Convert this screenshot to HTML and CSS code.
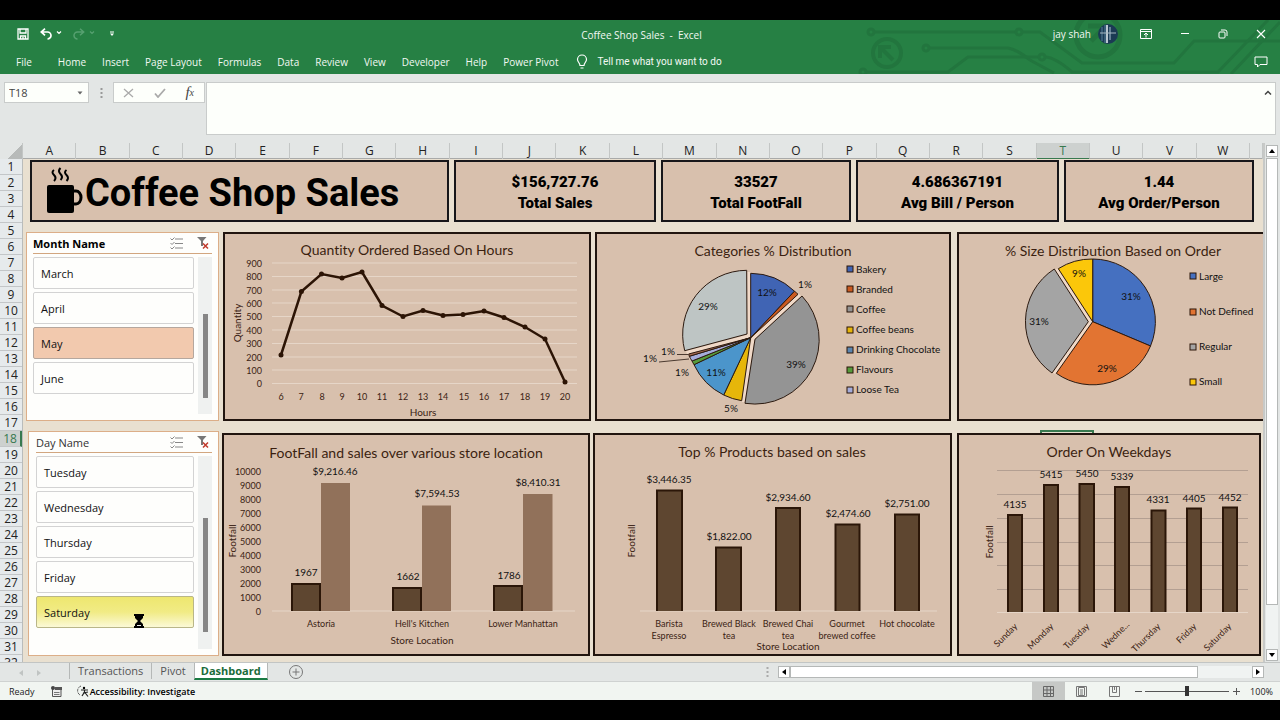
FILE: index.html
```html
<!DOCTYPE html>
<html lang="en">
<head>
<meta charset="utf-8">
<title>Coffee Shop Sales - Excel</title>
<link rel="stylesheet" href="styles.css">
</head>
<body>
<div class="app">
  <header class="ribbon">
    <svg class="circuit" viewBox="850 20 430 54" preserveAspectRatio="xMaxYMin slice" aria-hidden="true">
      <g fill="none" stroke="#22753e" stroke-width="3">
        <circle cx="871" cy="32" r="3"/><path d="M874 32H1016"/><circle cx="1019" cy="32" r="3"/><path d="M1022 32H1040L1082 63H1174L1194 41H1280"/>
        <circle cx="926" cy="48" r="3"/><path d="M929 48H1008Q1018 50 1030 60L1054 73"/>
        <circle cx="863" cy="72" r="3"/><path d="M866 72H948L968 57H1038"/><circle cx="1042" cy="57" r="3"/><path d="M1046 57Q1056 58 1072 72H1218L1268 20M1231 74L1280 22"/>
        <circle cx="887" cy="53" r="14" stroke-width="4"/><path d="M880 58V47H891M881 48L893 60" stroke-width="4"/>
        <circle cx="1098" cy="35" r="22" stroke-width="5"/><path d="M1088 26H1106V44M1105 27L1091 41" stroke-width="5"/>
      </g>
    </svg>
    <div class="titlebar">
      <div class="quick">
        <button class="ico" aria-label="Save"><svg width="12" height="12" viewBox="0 0 12 12"><path d="M1 1H11V11H1ZM3 1V5H9V1M3.500 11V8H8.500V11M6 9V11" fill="none" stroke="#fff" stroke-width="1.300"/></svg></button>
        <button class="ico" aria-label="Undo"><svg width="22" height="12" viewBox="0 0 22 12"><path d="M1 4H7.500A3.500 3.500 0 0 1 7.500 11M5 .700L1.300 4L5 7.300" fill="none" stroke="#fff" stroke-width="1.700"/><path d="M17 3.500L19 5.500L21 3.500" fill="none" stroke="#fff" stroke-width="1.200"/></svg></button>
        <button class="ico redo" aria-label="Redo" disabled><svg width="22" height="12" viewBox="0 0 22 12"><path d="M11 4H4.500A3.500 3.500 0 0 0 4.500 11M7 .700L10.700 4L7 7.300" fill="none" stroke="#56a070" stroke-width="1.500"/><path d="M17 3.500L19 5.500L21 3.500" fill="none" stroke="#56a070" stroke-width="1.200"/></svg></button>
        <button class="ico" aria-label="Customize quick access"><svg width="6" height="6" viewBox="0 0 6 6"><path d="M1 1H5" stroke="#fff"/><path d="M1 2.500H5L3 5Z" fill="#fff"/></svg></button>
      </div>
      <h1 class="doc">Coffee Shop Sales&nbsp; -&nbsp; Excel</h1>
      <div class="wincontrols">
        <span class="user">jay shah</span>
        <svg class="avatar" width="20" height="20" viewBox="0 0 20 20" aria-hidden="true"><circle cx="10" cy="10" r="10" fill="#1b3a54"/><path d="M4 3V17M7 1V19" stroke="#436982" stroke-width="1.500"/><path d="M9 1V19" stroke="#b9c6cf" stroke-width="2"/><path d="M12 3V16" stroke="#637f94" stroke-width="2"/><path d="M2 9H18" stroke="#a6b7c1"/></svg>
        <button class="ico w-rib" aria-label="Ribbon display options"><svg width="12" height="10" viewBox="0 0 12 10"><path d="M.500 .500H11.500V9.500H.500ZM.500 2.500H11.500M6 8.500V4.500M4 6L6 4L8 6" fill="none" stroke="#fff"/></svg></button>
        <button class="ico w-min" aria-label="Minimize"><svg width="10" height="10" viewBox="0 0 10 10"><path d="M1 4.500H9" stroke="#fff"/></svg></button>
        <button class="ico w-max" aria-label="Restore"><svg width="10" height="10" viewBox="0 0 10 10"><rect x="1" y="3" width="6" height="6" rx="1" fill="none" stroke="#fff"/><path d="M3 1H7A2 2 0 0 1 9 3V7" fill="none" stroke="#fff"/></svg></button>
        <button class="ico" aria-label="Close"><svg width="10" height="10" viewBox="0 0 10 10"><path d="M1 1L9 9M9 1L1 9" stroke="#fff" stroke-width="1.100"/></svg></button>
      </div>
    </div>
    <nav class="menu">
      <button class="file">File</button><button>Home</button><button>Insert</button><button>Page Layout</button><button>Formulas</button><button>Data</button><button>Review</button><button>View</button><button>Developer</button><button>Help</button><button>Power Pivot</button>
      <button class="tell"><svg width="12" height="16" viewBox="0 0 12 16"><path d="M4 11.500C4 9 1.500 8 1.500 5.500A4.500 4.500 0 0 1 10.500 5.500C10.500 8 8 9 8 11.500ZM4.500 14H7.500" fill="none" stroke="#fff" stroke-width="1.200"/></svg>Tell me what you want to do</button>
      <button class="comment" aria-label="Comments"><svg width="14" height="12" viewBox="0 0 14 12"><path d="M1 1H13V8.500H6L3.500 11V8.500H1Z" fill="none" stroke="#fff"/></svg></button>
    </nav>
  </header>

  <section class="formula">
    <div class="namebox"><input value="T18" aria-label="Name box"><button aria-label="Names"><svg width="6" height="4" viewBox="0 0 6 4"><path d="M.500 .500H5.500L3 3.500Z" fill="#666"/></svg></button></div>
    <svg class="dots" width="3" height="12" viewBox="0 0 3 12"><path d="M1.500 1V11" stroke="#999" stroke-width="2" stroke-dasharray="2 2"/></svg>
    <div class="fx">
      <button aria-label="Cancel"><svg width="11" height="10" viewBox="0 0 11 10"><path d="M1 1L10 9M10 1L1 9" stroke="#aaa" stroke-width="1.300"/></svg></button>
      <button aria-label="Enter"><svg width="12" height="10" viewBox="0 0 12 10"><path d="M1 5.500L4 9L11 1" fill="none" stroke="#aaa" stroke-width="1.800"/></svg></button>
      <button class="fn" aria-label="Insert function"><i>f</i><sub>x</sub></button>
    </div>
    <textarea class="bar" aria-label="Formula bar"></textarea>
    <svg class="collapse" width="8" height="5" viewBox="0 0 8 5"><path d="M1 4.500L4 1.500L7 4.500" fill="none" stroke="#444" stroke-width="1.500"/></svg>
  </section>

  <main class="work">
    <div class="sheet">
      <div class="cols"><span class="corner"></span><span>A</span><span>B</span><span>C</span><span>D</span><span>E</span><span>F</span><span>G</span><span>H</span><span>I</span><span>J</span><span>K</span><span>L</span><span>M</span><span>N</span><span>O</span><span>P</span><span>Q</span><span>R</span><span>S</span><span class="on">T</span><span>U</span><span>V</span><span>W</span><span></span></div>
      <div class="body">
        <div class="rows"><span>1</span><span>2</span><span>3</span><span>4</span><span>5</span><span>6</span><span>7</span><span>8</span><span>9</span><span>10</span><span>11</span><span>12</span><span>13</span><span>14</span><span>15</span><span>16</span><span>17</span><span class="on">18</span><span>19</span><span>20</span><span>21</span><span>22</span><span>23</span><span>24</span><span>25</span><span>26</span><span>27</span><span>28</span><span>29</span><span>30</span><span>31</span><span>32</span></div>
        <div class="canvas">
          <i class="selected"></i>
          <div class="row kpis">
            <div class="card banner">
              <svg width="37" height="48" viewBox="0 0 37 48" aria-hidden="true"><rect x="1" y="18" width="27" height="28" rx="2"/><path d="M28 24H30A5 6.500 0 0 1 30 37H28" fill="none" stroke="#000" stroke-width="3"/><path d="M8 3Q5 5 8 8T8 14M14.500 1Q11.500 4 14.500 7T14.500 13M20.500 3Q17.500 5 20.500 8T20.500 14" fill="none" stroke="#000" stroke-width="2"/></svg>
              <h2>Coffee Shop Sales</h2>
            </div>
            <div class="card kpi"><b>$156,727.76</b><b>Total Sales</b></div>
            <div class="card kpi"><b>33527</b><b>Total FootFall</b></div>
            <div class="card kpi"><b>4.686367191</b><b>Avg Bill / Person</b></div>
            <div class="card kpi"><b>1.44</b><b>Avg Order/Person</b></div>
          </div>

          <div class="row middle">
            <section class="slicer">
              <header><h3>Month Name</h3>
                <button aria-label="Multi-select"><svg width="13" height="13" viewBox="0 0 13 13"><path d="M5 2H13M5 6.500H13M5 11H13M.500 1.500L2 3L4.500 .500M.500 6L2 7.500L4.500 5M.500 10.500L2 12L4.500 9.500" fill="none" stroke="#888"/></svg></button>
                <button aria-label="Clear filter"><svg width="14" height="14" viewBox="0 0 14 14"><path d="M1 1H10.500L7 5V10H5V5Z" fill="#777"/><path d="M7 7.500L12 12.500M12 7.500L7 12.500" stroke="#c0392b" stroke-width="1.500"/></svg></button></header>
              <div class="pick"><div class="items"><button>March</button><button>April</button><button class="peach">May</button><button>June</button></div><div class="track"><i class="t1"></i></div></div>
            </section>
            <svg class="chart" viewBox="225 234 364 185" role="img" aria-label="Quantity Ordered Based On Hours">
              <path class="gl" d="M272 263H577M272 276.500H577M272 290H577M272 303H577M272 316.500H577M272 330H577M272 343.500H577M272 357H577M272 370H577M272 383.500H577"/>
              <text class="ct" x="407" y="255">Quantity Ordered Based On Hours</text>
              <g class="ax end"><text x="262" y="267">900</text><text x="262" y="280">800</text><text x="262" y="294">700</text><text x="262" y="307">600</text><text x="262" y="320">500</text><text x="262" y="334">400</text><text x="262" y="347">300</text><text x="262" y="361">200</text><text x="262" y="374">100</text><text x="262" y="387">0</text></g>
              <g class="ax"><text x="281" y="400">6</text><text x="301" y="400">7</text><text x="322" y="400">8</text><text x="342" y="400">9</text><text x="362" y="400">10</text><text x="382" y="400">11</text><text x="403" y="400">12</text><text x="423" y="400">13</text><text x="443" y="400">14</text><text x="464" y="400">15</text><text x="484" y="400">16</text><text x="504" y="400">17</text><text x="525" y="400">18</text><text x="545" y="400">19</text><text x="565" y="400">20</text></g>
              <text class="at" x="423" y="416">Hours</text>
              <text class="at" transform="translate(241 323) rotate(-90)">Quantity</text>
              <polyline class="ln" points="281,355 301.400,291.500 321.500,274 342,278 362,272 382,305.500 403,316.500 423,310.500 443,315.500 463,314.500 484,311 504,317.500 525,327 545,339 565,382"/>
              <g fill="#2c1405"><circle cx="281" cy="355" r="2.500"/><circle cx="301.400" cy="291.500" r="2.500"/><circle cx="321.500" cy="274" r="2.500"/><circle cx="342" cy="278" r="2.500"/><circle cx="362" cy="272" r="2.500"/><circle cx="382" cy="305.500" r="2.500"/><circle cx="403" cy="316.500" r="2.500"/><circle cx="423" cy="310.500" r="2.500"/><circle cx="443" cy="315.500" r="2.500"/><circle cx="463" cy="314.500" r="2.500"/><circle cx="484" cy="311" r="2.500"/><circle cx="504" cy="317.500" r="2.500"/><circle cx="525" cy="327" r="2.500"/><circle cx="545" cy="339" r="2.500"/><circle cx="565" cy="382" r="2.500"/></g>
            </svg>
            <svg class="chart" viewBox="597 234 352 185" role="img" aria-label="Categories % Distribution">
              <text class="ct" x="773" y="256">Categories % Distribution</text>
              <path class="halo" d="M800 295L753 338.500L743 402M686.500 352.500L749 336L748.700 272"/>
              <g class="pie">
                <path fill="#4064b4" d="M750.700 337.700V273.300A64.300 64.300 0 0 1 794.500 291.200Z"/>
                <path fill="#cb5a20" d="M750.700 337.700L794.500 291.200A64.300 64.300 0 0 1 798 294.300Z"/>
                <path fill="#949494" d="M755 339.300L802 296A64.300 64.300 0 0 1 745 403.300Z"/>
                <path fill="#e6b60a" d="M750.700 337.700L741.700 400.700A64.300 64.300 0 0 1 723.700 395Z"/>
                <path fill="#4b95cb" d="M750.700 337.700L723.700 395A64.300 64.300 0 0 1 694 364.700Z"/>
                <path fill="#569b3b" d="M750.700 337.700L694 364.700A64.300 64.300 0 0 1 692 361Z"/>
                <path fill="#a5addb" d="M750.700 337.700L692 361A64.300 64.300 0 0 1 689.300 356.300Z"/>
                <path fill="#a66a50" d="M750.700 337.700L689.300 356.300A64.300 64.300 0 0 1 688.700 354Z"/>
                <path fill="#bec5c4" d="M747 334L684.700 350.700A64.300 64.300 0 0 1 746.700 270.300Z"/>
              </g>
              <path d="M659 362L689 359M677 354.500H688" stroke="#4b3a30" fill="none"/>
              <g class="dl"><text x="767" y="296">12%</text><text x="805" y="288">1%</text><text x="708" y="310">29%</text><text x="796" y="368">39%</text><text x="716" y="376">11%</text><text x="731" y="412">5%</text><text x="668" y="355">1%</text><text x="650" y="362">1%</text><text x="682" y="376">1%</text></g>
              <g class="key"><rect fill="#4064b4" x="847" y="266" width="6" height="6"/><rect fill="#cb5a20" x="847" y="286" width="6" height="6"/><rect fill="#949494" x="847" y="306" width="6" height="6"/><rect fill="#e6b60a" x="847" y="327" width="6" height="6"/><rect fill="#5b86b0" x="847" y="347" width="6" height="6"/><rect fill="#569b3b" x="847" y="367" width="6" height="6"/><rect fill="#a5addb" x="847" y="387" width="6" height="6"/></g>
              <g class="lg"><text x="856" y="273">Bakery</text><text x="856" y="293">Branded</text><text x="856" y="313">Coffee</text><text x="856" y="333">Coffee beans</text><text x="856" y="353">Drinking Chocolate</text><text x="856" y="373">Flavours</text><text x="856" y="393">Loose Tea</text></g>
            </svg>
            <svg class="chart third open" viewBox="959 234 304 185" role="img" aria-label="% Size Distribution Based on Order">
              <text class="ct" x="1113" y="256">% Size Distribution Based on Order</text>
              <path class="halo" d="M1054 373.500L1090.500 321.700L1056.300 269"/>
              <g class="pie">
                <path fill="#4570c0" d="M1092.700 321.700V259A62.700 62.700 0 0 1 1150.500 346Z"/>
                <path fill="#e27432" d="M1092.700 321.700L1150.500 346A62.700 62.700 0 0 1 1056.300 373.300Z"/>
                <path fill="#a4a4a4" d="M1088.300 321.700L1052 373A62.700 62.700 0 0 1 1054.300 269Z"/>
                <path fill="#fbc70a" d="M1092.700 321.700L1058.300 268.700A62.700 62.700 0 0 1 1092.700 259Z"/>
              </g>
              <g class="dl"><text x="1131" y="300">31%</text><text x="1107" y="372">29%</text><text x="1039" y="325">31%</text><text x="1079" y="277">9%</text></g>
              <g class="key"><rect fill="#4570c0" x="1190" y="273" width="6" height="6"/><rect fill="#e27432" x="1190" y="309" width="6" height="6"/><rect fill="#a4a4a4" x="1190" y="344" width="6" height="6"/><rect fill="#fbc70a" x="1190" y="379" width="6" height="6"/></g>
              <g class="lg"><text x="1199" y="280">Large</text><text x="1199" y="315">Not Defined</text><text x="1199" y="350">Regular</text><text x="1199" y="385">Small</text></g>
            </svg>
          </div>

          <div class="row bottom">
            <section class="slicer">
              <header><h3 class="plain">Day Name</h3>
                <button aria-label="Multi-select"><svg width="13" height="13" viewBox="0 0 13 13"><path d="M5 2H13M5 6.500H13M5 11H13M.500 1.500L2 3L4.500 .500M.500 6L2 7.500L4.500 5M.500 10.500L2 12L4.500 9.500" fill="none" stroke="#888"/></svg></button>
                <button aria-label="Clear filter"><svg width="14" height="14" viewBox="0 0 14 14"><path d="M1 1H10.500L7 5V10H5V5Z" fill="#777"/><path d="M7 7.500L12 12.500M12 7.500L7 12.500" stroke="#c0392b" stroke-width="1.500"/></svg></button></header>
              <div class="pick"><div class="items"><button>Tuesday</button><button>Wednesday</button><button>Thursday</button><button>Friday</button><button class="yellow">Saturday<svg class="wait" width="10" height="14" viewBox="0 0 10 14"><path d="M0 0H10V2H9V4L6 7L9 10V12H10V14H0V12H1V10L4 7L1 4V2H0Z"/><path d="M3 11.500H7" stroke="#eee"/></svg></button></div><div class="track"><i class="t2"></i></div></div>
            </section>
            <svg class="chart" viewBox="224 435 364 219" role="img" aria-label="FootFall and sales over various store location">
              <path class="gl" d="M272 611H575"/>
              <text class="ct" x="406" y="458">FootFall and sales over various store location</text>
              <g class="ax end"><text x="261" y="475">10000</text><text x="261" y="489">9000</text><text x="261" y="503">8000</text><text x="261" y="517">7000</text><text x="261" y="531">6000</text><text x="261" y="545">5000</text><text x="261" y="559">4000</text><text x="261" y="573">3000</text><text x="261" y="587">2000</text><text x="261" y="601">1000</text><text x="261" y="615">0</text></g>
              <g fill="#91715a"><path d="M321 483H350V611H321ZM422 505.500H451V611H422ZM523 494H552.500V611H523Z"/></g>
              <g class="dark"><path d="M292 611V584H320V611M393 611V588H421V611M494 611V586H522V611"/></g>
              <g class="dl"><text x="306" y="576">1967</text><text x="335" y="475">$9,216.46</text><text x="408" y="580">1662</text><text x="437" y="497">$7,594.53</text><text x="509" y="579">1786</text><text x="538" y="486">$8,410.31</text></g>
              <g class="ca"><text x="321" y="627">Astoria</text><text x="422" y="627">Hell's Kitchen</text><text x="523" y="627">Lower Manhattan</text></g>
              <text class="at" x="422" y="644">Store Location</text>
              <text class="at" transform="translate(236 541) rotate(-90)">Footfall</text>
            </svg>
            <svg class="chart" viewBox="595 435 355 219" role="img" aria-label="Top % Products based on sales">
              <path class="gl" d="M640 611H937"/>
              <text class="ct" x="772" y="457">Top % Products based on sales</text>
              <g class="dark"><path d="M657 611V490.500H682V611M716 611V547.500H741V611M776 611V508H800V611M835.500 611V524.500H859.500V611M895 611V514.500H919V611"/></g>
              <g class="dl"><text x="669" y="483">$3,446.35</text><text x="729" y="540">$1,822.00</text><text x="788" y="501">$2,934.60</text><text x="848" y="517">$2,474.60</text><text x="907" y="507">$2,751.00</text></g>
              <g class="ca"><text x="669" y="627">Barista</text><text x="669" y="639">Espresso</text><text x="729" y="627">Brewed Black</text><text x="729" y="639">tea</text><text x="788" y="627">Brewed Chai</text><text x="788" y="639">tea</text><text x="847" y="627">Gourmet</text><text x="847" y="639">brewed coffee</text><text x="907" y="627">Hot chocolate</text></g>
              <text class="at" x="788" y="650">Store Location</text>
              <text class="at" transform="translate(635 541) rotate(-90)">Footfall</text>
            </svg>
            <svg class="chart third" viewBox="959 435 300 219" role="img" aria-label="Order On Weekdays">
              <path class="gd" d="M997 470.500H1248M997 494.500H1248M997 518.500H1248M997 542.500H1248M997 565.500H1248M997 589.500H1248"/><path class="gl" d="M997 612.500H1248"/>
              <text class="ct" x="1109" y="457">Order On Weekdays</text>
              <g class="dark"><path d="M1008 612V515H1022V612M1044 612V485H1058V612M1079.500 612V484H1094V612M1115 612V487H1129V612M1151.500 612V510.500H1165.500V612M1187 612V508.500H1201V612M1223 612V507.500H1237V612"/></g>
              <g class="dl"><text x="1015" y="508">4135</text><text x="1051" y="478">5415</text><text x="1087" y="477">5450</text><text x="1122" y="480">5339</text><text x="1158" y="503">4331</text><text x="1194" y="502">4405</text><text x="1230" y="501">4452</text></g>
              <g class="ca end"><text transform="translate(1018 627) rotate(-45)">Sunday</text><text transform="translate(1054 627) rotate(-45)">Monday</text><text transform="translate(1090 627) rotate(-45)">Tuesday</text><text transform="translate(1130 625) rotate(-45)">Wedne...</text><text transform="translate(1161 627) rotate(-45)">Thursday</text><text transform="translate(1197 627) rotate(-45)">Friday</text><text transform="translate(1232 627) rotate(-45)">Saturday</text></g>
              <text class="at" transform="translate(993 542) rotate(-90)">Footfall</text>
            </svg>
          </div>
        </div>
      </div>
    </div>
    <div class="vscroll">
      <button aria-label="Scroll up"><svg width="6" height="4" viewBox="0 0 6 4"><path d="M0 4L3 0L6 4Z"/></svg></button>
      <div class="vthumb"></div><div class="vrest"></div>
      <button aria-label="Scroll down"><svg width="6" height="4" viewBox="0 0 6 4"><path d="M0 0L3 4L6 0Z"/></svg></button>
    </div>
  </main>

  <nav class="tabs">
    <span class="arrows"><svg width="22" height="8" viewBox="0 0 22 8"><path d="M4 1V7L0 4ZM18 1V7L22 4Z" fill="#c0c4c3"/></svg></span>
    <button>Transactions</button><button class="pivot">Pivot</button><button class="active">Dashboard</button>
    <button class="add" aria-label="New sheet"><svg width="14" height="14" viewBox="0 0 14 14"><circle cx="7" cy="7" r="6.500" fill="none" stroke="#777"/><path d="M3.500 7H10.500M7 3.500V10.500" stroke="#777"/></svg></button>
    <div class="hscroll">
      <svg class="dots" width="3" height="12" viewBox="0 0 3 12"><path d="M1.500 1V11" stroke="#aaa" stroke-width="2" stroke-dasharray="2 2"/></svg>
      <button aria-label="Scroll left"><svg width="4" height="6" viewBox="0 0 4 6"><path d="M4 0V6L0 3Z"/></svg></button><div class="hthumb"></div><div class="hrest"></div><button aria-label="Scroll right"><svg width="4" height="6" viewBox="0 0 4 6"><path d="M0 0V6L4 3Z"/></svg></button>
    </div>
  </nav>

  <footer class="status">
    <span>Ready</span>
    <svg class="rec" width="11" height="11" viewBox="0 0 11 11"><path d="M1.500 3V10.500H10V3" fill="#eee" stroke="#555"/><rect x="4" y="1" width="7" height="3" fill="#555"/><circle cx="2" cy="2" r="2" fill="#444"/><path d="M3 6.500H8.500M3 8.500H8.500" stroke="#777"/></svg>
    <svg class="acc" width="13" height="12" viewBox="0 0 13 12"><path d="M5 1A5 5 0 0 0 4 10" fill="none" stroke="#555" stroke-dasharray="3 1"/><circle cx="8" cy="3" r="1.200"/><path d="M5 5H12M8.500 5V7L6 11M8.500 7L12 11.500M7 8L12 7" fill="none" stroke="#222" stroke-width="1.200"/></svg>
    <b>Accessibility: Investigate</b>
    <div class="views">
      <button class="on" aria-label="Normal"><svg width="11" height="11" viewBox="0 0 11 11"><path d="M.500 .500H10.500V10.500H.500ZM.500 4H10.500M.500 7.500H10.500M4 .500V10.500M7.500 .500V10.500" fill="none" stroke="#666"/></svg></button>
      <button aria-label="Page layout"><svg width="11" height="11" viewBox="0 0 11 11"><path d="M.500 .500H10.500V10.500H.500ZM2.500 1.500H8.500V9.500H2.500ZM4 4H7M4 6H7M4 8H7" fill="none" stroke="#777"/></svg></button>
      <button aria-label="Page break preview"><svg width="11" height="11" viewBox="0 0 11 11"><path d="M.500 .500H10.500V10.500H.500ZM3.500 .500V6.500H7.500V.500M5.500 .500V4" fill="none" stroke="#777"/></svg></button>
      <button class="zb" aria-label="Zoom out"><svg width="7" height="7" viewBox="0 0 7 7"><path d="M0 3.500H7" stroke="#555"/></svg></button>
      <input type="range" min="0" max="200" value="100" aria-label="Zoom">
      <button class="zb" aria-label="Zoom in"><svg width="7" height="7" viewBox="0 0 7 7"><path d="M0 3.500H7M3.500 0V7" stroke="#555"/></svg></button>
      <span class="pct">100%</span>
    </div>
  </footer>
</div>
</body>
</html>
```

FILE: styles.css
```css
* { box-sizing: border-box; }
body { margin: 0; background: #000; font-family: "Open Sans", "Noto Sans", sans-serif; font-size: 10px; color: #222; }
button { font: inherit; color: inherit; background: none; border: 0; padding: 0; margin: 0; display: flex; align-items: center; }
h1, h2, h3 { margin: 0; font: inherit; }
.app { height: 100vh; padding: 20px 0; display: flex; flex-direction: column; }

.ribbon { position: relative; background: #268044; color: #f2f8f3; flex: none; }
.circuit { position: absolute; right: 0; top: 0; width: 430px; height: 54px; }
.titlebar { position: relative; height: 29px; display: grid; grid-template-columns: 1fr auto 1fr; align-items: center; padding: 0 14px 0 17px; }
.quick { display: flex; align-items: center; gap: 11px; padding-bottom: 2px; }
.redo { margin-right: 3px; }
.wincontrols { display: flex; align-items: center; justify-content: flex-end; padding-bottom: 2px; }
.avatar { margin: 0 22px 0 7px; }
.w-rib, .w-min, .w-max { margin-right: 28px; }
.menu { position: relative; height: 25px; display: flex; align-items: center; gap: 16px; padding: 0 12px 0 16px; }
.menu .file { margin-right: 10px; }
.menu .tell { margin-left: 2px; gap: 9px; font-family: Roboto, sans-serif; }
.menu .comment { margin-left: auto; }

.formula { position: relative; flex: none; background: #e3e6e5; display: flex; align-items: flex-start; padding: 8px 4px; height: 69px; }
.namebox { display: flex; width: 85px; height: 21px; background: #fdfffb; border: 1px solid #c9cccb; padding-right: 5px; }
.namebox input { flex: 1; min-width: 0; border: 0; background: none; font: 11px "Open Sans", sans-serif; color: #444; padding: 0 4px; }
.formula .dots { margin: 5px 10px 0 11px; }
.fx { display: flex; width: 92px; height: 21px; background: #fdfffb; border: 1px solid #c9cccb; margin-right: 1px; justify-content: space-between; padding: 0 10px 0 9px; }
.fn { font: 15px "Liberation Serif", serif; color: #444; }
.fn sub { font-size: 10px; font-style: italic; }
.bar { flex: 1; height: 53px; resize: none; border: 1px solid #c9cccb; background: #fdfffb; margin: 0; }
.collapse { position: absolute; right: 8px; top: 16px; }

.work { flex: 1; min-height: 0; display: flex; background: #e3e6e5; }
.sheet { flex: 1; min-width: 0; display: flex; flex-direction: column; border-right: 2px solid #c7c9c7; }
.cols { display: grid; grid-template-columns: 23px repeat(23, 1fr) 13px; height: 16px; flex: none; font-size: 12px; line-height: 15px; text-align: center; background: #e3e6e5; border-bottom: 1px solid #a9aaa9; }
.cols span { border-right: 1px solid #c3c6c5; }
.cols .corner { background: linear-gradient(135deg, #e3e6e5 60%, #b7bab9 60%); }
.cols .on { background: #cdd1cf; color: #38794f; border-bottom: 2px solid #38794f; }
.body { flex: 1; min-height: 0; display: flex; overflow: hidden; }
.rows { width: 23px; flex: none; border-right: 1px solid #b9bcbb; font-size: 12px; text-align: center; background: #e6eaec; overflow: hidden; }
.rows span { display: block; height: 16px; line-height: 16px; border-bottom: 1px solid #c3c6c8; }
.rows .on { background: #cdd1cf; color: #38794f; border-right: 2px solid #38794f; }

.canvas { position: relative; flex: 1; min-width: 0; background: #e9e0d0; padding: 1px 0 6px; display: flex; flex-direction: column; gap: 10px; }
.selected { position: absolute; left: 82%; top: 271px; width: 54px; height: 16px; border: 2px solid #38794f; }
.row { position: relative; display: grid; min-height: 0; grid-template-rows: minmax(0, 1fr); }
.kpis { flex: 62 1 0; grid-template-columns: 419fr 202fr 190fr 203fr 190fr; gap: 5px; padding: 0 9px 0 7px; }
.middle { flex: 189 1 0; grid-template-columns: 193fr 368fr 356fr 308fr; gap: 4px; padding-left: 3px; }
.bottom { flex: 223 1 0; grid-template-columns: 191fr 368fr 359fr 306fr; gap: 3px; padding: 0 2px 0 5px; margin-top: 2px; }
.card, .chart { background: #d8c0ad; border: 2px solid #17161a; }
.card { display: flex; align-items: center; }
.banner { padding-left: 14px; gap: 2px; }
.banner h2 { font: bold 38px/52px Roboto, sans-serif; color: #000; white-space: nowrap; padding-top: 4px; }
.kpi { flex-direction: column; justify-content: center; padding-top: 3px; font: bold 15px/21px Roboto, sans-serif; color: #000; }
.chart { display: block; width: 100%; height: 100%; font-family: Lato, sans-serif; font-variant-ligatures: none; border-color: #21150f; }
.third { margin-left: 2px; width: calc(100% - 2px); }
.open { border-right: 0; }

.slicer { background: #fefefc; border: 1px solid #dcae88; padding: 0 6px; display: flex; flex-direction: column; min-height: 0; color: #222; }
.bottom .slicer { margin-top: -2px; padding-left: 7px; }
.slicer header { display: flex; align-items: center; height: 21px; gap: 13px; padding-right: 2px; border-bottom: 1px solid #d2a67f; }
.slicer h3 { flex: 1; font: bold 11px "Open Sans", sans-serif; color: #000; }
.slicer h3.plain { font-weight: 400; color: #333; }
.pick { flex: 1; display: flex; gap: 4px; padding: 3px 0 6px; min-height: 0; }
.items { flex: 1; display: flex; flex-direction: column; gap: 3px; }
.items button { position: relative; height: 32px; padding-left: 7px; font-size: 11px; border: 1px solid #d3d3d3; border-radius: 2px; color: #111; }
.items .peach { background: #f2c9ae; border-color: #b5a79e; }
.items .yellow { background: linear-gradient(#eee76f, #f1eb85 50%, #fbf9d6); border-color: #b9b688; }
.wait { position: absolute; left: 97px; top: 17px; }
.track { width: 14px; background: #eff1f0; display: flex; flex-direction: column; align-items: center; }
.track i { width: 5px; background: #868686; }
.t1 { margin-top: 57px; height: 84px; }
.t2 { margin-top: 62px; height: 114px; }

.chart text { text-anchor: middle; fill: #111; }
.chart .ct { font-size: 14px; fill: #3b1f10; }
.chart .ax text { font-size: 9px; fill: #3b2314; }
.chart .end text { text-anchor: end; }
.chart .ca text { font-size: 9px; fill: #3b2314; }
.chart .at { font-size: 10px; fill: #3b2314; }
.chart .dl text { font-size: 10px; }
.chart .lg text { font-size: 10px; text-anchor: start; }
.key rect { stroke: #2b1408; }
.gl { stroke: #e6d6c8; fill: none; }
.gd { stroke: #b39f92; fill: none; }
.ln { fill: none; stroke: #2c1405; stroke-width: 2.5; }
.dark { fill: #5e4630; stroke: #2b1608; stroke-width: 2; }
.pie { stroke: #2c1a10; stroke-width: 1; stroke-linejoin: round; }
.halo { fill: none; stroke: #f0d9c8; stroke-width: 3; }

.vscroll { width: 15px; display: flex; flex-direction: column; padding: 2px 2px 1px 1px; background: #e3e6e5; }
.vscroll button, .hscroll button { width: 12px; height: 12px; justify-content: center; background: #fff; border: 1px solid #b5b8b7; flex: none; }
.vthumb { flex: 449; background: #fff; border: 1px solid #b5b8b7; margin-top: 1px; }
.vrest { flex: 44; background: #f0f3f2; }

.tabs { flex: none; height: 20px; background: #e3e6e5; border-top: 1px solid #c2c5c4; border-bottom: 1px solid #cfd2d1; display: flex; align-items: flex-start; padding-right: 16px; }
.tabs > button { height: 16px; font-size: 11px; color: #555; padding: 0 8px 2px; border-left: 1px solid #b5b8b7; }
.tabs .arrows { width: 69px; padding: 3px 0 0 19px; }
.tabs > .active { background: #fff; color: #1a6b3a; font-weight: 700; border-bottom: 2px solid #1a7a43; border-right: 1px solid #b5b8b7; height: 17px; padding: 0 6px 1px; }
.tabs > .add { border: 0; margin-left: 13px; margin-top: 2px; }
.hscroll { width: 498px; margin-left: auto; margin-top: 3px; display: flex; height: 12px; }
.hscroll .dots { margin-right: 9px; }
.hthumb { flex: 406; background: #fff; border: 1px solid #b5b8b7; }
.hrest { flex: 54; background: #f0f3f2; }

.status { flex: none; height: 18px; background: #f1f5f1; display: flex; align-items: center; padding: 0 7px 0 9px; font-size: 9px; }
.status b { font-weight: 600; color: #000; }
.rec { margin: 0 14px 0 16px; }
.acc { margin-right: 1px; }
.views { margin-left: auto; display: flex; align-items: center; height: 100%; }
.views button { width: 33px; height: 100%; justify-content: center; }
.views .on { background: #c6c8c6; }
.views .zb { width: 14px; }
.views input { appearance: none; width: 84px; height: 12px; margin: 0; background: linear-gradient(#555, #555) center / 100% 1px no-repeat; }
.views input::-webkit-slider-thumb { appearance: none; width: 4px; height: 10px; background: #333; }
.pct { width: 30px; text-align: right; }
```
